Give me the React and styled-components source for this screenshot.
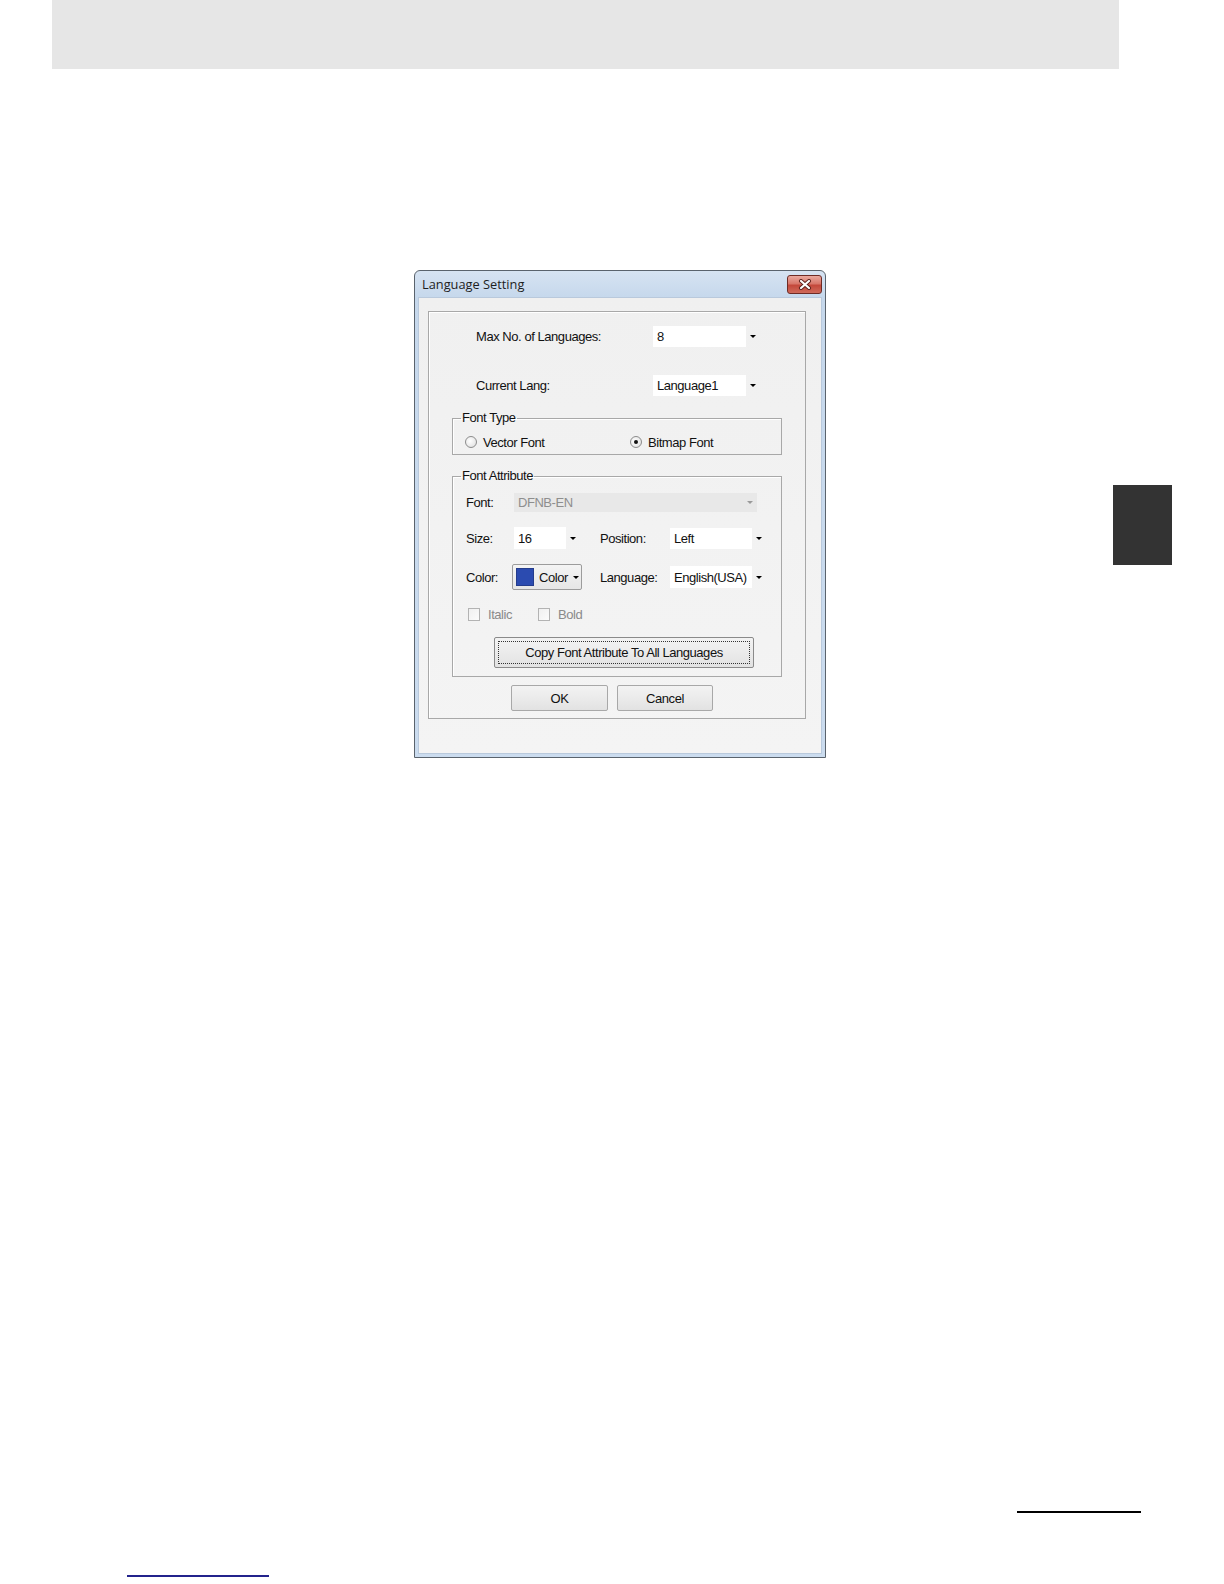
import React from 'react';
import styled, { createGlobalStyle } from 'styled-components';

const GlobalStyle = createGlobalStyle`
  html, body { margin: 0; padding: 0; background: #ffffff; }
  body { font-family: "Liberation Sans", Arial, sans-serif; color: #000; }
  * { box-sizing: border-box; }
`;

const Page = styled.div`
  width: 1224px;
  height: 1584px;
  overflow: hidden;
  background: #ffffff;
  display: flex;
  flex-direction: column;
`;

const HeaderBand = styled.div`
  margin-left: 52px;
  width: 1067px;
  height: 69px;
  background: #e6e6e6;
`;

const Middle = styled.div`
  display: flex;
  align-items: flex-start;
  margin-top: 201px;
`;

const ThumbTab = styled.div`
  margin-left: 287px;
  margin-top: 215px;
  width: 59px;
  height: 80px;
  background: #333333;
`;

const PageRule = styled.div`
  margin-top: 753px;
  margin-left: 1017px;
  width: 124px;
  height: 2px;
  background: #000;
`;

const LinkRule = styled.div`
  margin-top: 62px;
  margin-left: 127px;
  width: 142px;
  height: 2px;
  background: #23238c;
`;

/* ---------- dialog ---------- */

const Dialog = styled.div`
  margin-left: 414px;
  width: 412px;
  height: 488px;
  border: 1px solid #5a636d;
  border-radius: 6px 6px 0 0;
  background: linear-gradient(to bottom, #d6e3f2 0px, #c6d8ec 26px, #cbdcef 100%);
  display: flex;
  flex-direction: column;
`;

const TitleBar = styled.div`
  height: 26px;
  display: flex;
  align-items: flex-start;
  justify-content: space-between;
`;

const TitleText = styled.span`
  padding-left: 7px;
  line-height: 26px;
  font-family: "Open Sans", "Noto Sans", sans-serif;
  font-size: 12.8px;
  color: #1e1e1e;
`;

const CloseButton = styled.div`
  margin-top: 4px;
  margin-right: 3px;
  width: 35px;
  height: 19px;
  border: 1px solid #6e2b25;
  border-radius: 3px;
  background: linear-gradient(to bottom, #e9a99f 0%, #d8776a 45%, #c4483b 55%, #cf6a5a 100%);
  display: flex;
  align-items: center;
  justify-content: center;
`;

const Body = styled.div`
  flex: 1;
  margin: 0 3px 3px 3px;
  background: linear-gradient(to bottom, #f0f0f0, #f4f4f4);
  border: 1px solid #b9c9dc;
  display: flex;
  padding: 13px 15px 34px 9px;
`;

const Panel = styled.div`
  flex: 1;
  border: 1px solid #a8a8a8;
  box-shadow: inset 1px 1px 0 #ffffff;
  display: flex;
  flex-direction: column;
  font-size: 13px;
  letter-spacing: -0.45px;
  color: #111;
`;

const SettingRow = styled.div`
  display: flex;
  align-items: center;
  padding-left: 47px;
  margin-top: ${(p) => p.$gap}px;
`;

const SettingLabel = styled.span`
  width: 177px;
`;

const ComboBox = styled.div`
  display: flex;
  align-items: stretch;
  justify-self: start;
  width: max-content;
  height: ${(p) => p.$height}px;
  background: ${(p) => (p.$disabled ? '#e8e8e8' : 'transparent')};
`;

const ComboField = styled.div`
  width: ${(p) => p.$width}px;
  background: ${(p) => (p.$disabled ? 'transparent' : '#ffffff')};
  color: ${(p) => (p.$disabled ? '#8e8e8e' : '#111')};
  padding-left: 4px;
  display: flex;
  align-items: center;
  white-space: nowrap;
`;

const ComboButton = styled.div`
  width: 14px;
  display: flex;
  align-items: center;
  justify-content: center;
`;

const Caret = styled.span`
  width: 0;
  height: 0;
  border-left: 3px solid transparent;
  border-right: 3px solid transparent;
  border-top: 3px solid ${(p) => (p.$disabled ? '#9a9a9a' : '#000')};
`;

function Combo({ value, width, height, disabled }) {
  return (
    <ComboBox $height={height} $disabled={disabled}>
      <ComboField $width={width} $disabled={disabled}>{value}</ComboField>
      <ComboButton>
        <Caret $disabled={disabled} />
      </ComboButton>
    </ComboBox>
  );
}

const GroupBox = styled.fieldset`
  margin: ${(p) => p.$top}px 23px 0 23px;
  padding: 0 0 ${(p) => p.$bottom}px 0;
  border: 1px solid #a8a8a8;
  box-shadow: inset 1px 1px 0 #ffffff;
  min-width: 0;
`;

const GroupLegend = styled.legend`
  margin-left: 8px;
  padding: 0 1px;
  line-height: 14px;
  font-size: 13px;
`;

const RadioRow = styled.div`
  display: flex;
  align-items: center;
  height: 18px;
  margin-top: 8px;
  padding-left: 12px;
`;

const RadioItem = styled.label`
  display: flex;
  align-items: center;
  gap: 6px;
  width: ${(p) => (p.$width ? `${p.$width}px` : 'auto')};
`;

const RadioCircle = styled.span`
  width: 12px;
  height: 12px;
  border-radius: 50%;
  border: 1px solid #8c8c8c;
  background: radial-gradient(circle at 40% 40%, #ffffff 0%, #e6e6e6 70%, #d4d4d4 100%);
  display: flex;
  align-items: center;
  justify-content: center;
  &::after {
    content: '';
    width: 4px;
    height: 4px;
    border-radius: 50%;
    background: ${(p) => (p.$checked ? '#111' : 'transparent')};
  }
`;

const AttrGrid = styled.div`
  display: grid;
  grid-template-columns: 48px 86px 70px 1fr;
  padding-left: 13px;
  margin-top: ${(p) => p.$gap}px;
  height: ${(p) => p.$height}px;
  align-items: center;
`;

const WideCell = styled.div`
  grid-column: 2 / 5;
`;

const ColorButton = styled.div`
  margin-left: -2px;
  width: 70px;
  height: 26px;
  border: 1px solid #9c9c9c;
  border-radius: 2px;
  background: linear-gradient(to bottom, #f4f4f4, #e6e6e6);
  display: flex;
  align-items: center;
  padding-left: 3px;
  gap: 5px;
`;

const Swatch = styled.span`
  width: 18px;
  height: 18px;
  background: #2b4bb0;
  border: 1px solid #243c8c;
`;

const CheckRow = styled.div`
  display: flex;
  align-items: center;
  height: 19px;
  margin-top: 15px;
  padding-left: 15px;
  color: #8a8a8a;
`;

const CheckItem = styled.label`
  display: flex;
  align-items: center;
  gap: 8px;
  width: ${(p) => (p.$width ? `${p.$width}px` : 'auto')};
`;

const CheckBoxSquare = styled.span`
  width: 12px;
  height: 13px;
  border: 1px solid #b3b3b3;
  background: linear-gradient(135deg, #f0f0f0, #fbfbfb);
`;

const PushButton = styled.div`
  position: relative;
  width: ${(p) => p.$width}px;
  height: ${(p) => p.$height}px;
  margin-left: ${(p) => p.$left || 0}px;
  margin-top: ${(p) => p.$top || 0}px;
  border: 1px solid ${(p) => (p.$focused ? '#8a8a8a' : '#a8a8a8')};
  border-radius: 2px;
  background: linear-gradient(to bottom, #f3f3f3 0%, #ebebeb 50%, #e2e2e2 100%);
  display: flex;
  align-items: center;
  justify-content: center;
  font-size: 13px;
  &::after {
    content: '';
    position: absolute;
    inset: 3px;
    border: 1px dotted ${(p) => (p.$focused ? '#333' : 'transparent')};
  }
`;

const ButtonRow = styled.div`
  display: flex;
  gap: 9px;
  margin-top: 8px;
  padding-left: 82px;
`;

export default function App() {
  return (
    <>
      <GlobalStyle />
      <Page>
        <HeaderBand />
        <Middle>
          <Dialog>
            <TitleBar>
              <TitleText>Language Setting</TitleText>
              <CloseButton>
                <svg width="14" height="11" viewBox="0 0 14 11">
                  <path d="M3 2 L11 9 M11 2 L3 9" stroke="#5a1f1a" strokeWidth="4" strokeLinecap="round" />
                  <path d="M3 2 L11 9 M11 2 L3 9" stroke="#ffffff" strokeWidth="2.2" strokeLinecap="round" />
                </svg>
              </CloseButton>
            </TitleBar>
            <Body>
              <Panel>
                <SettingRow $gap={14}>
                  <SettingLabel>Max No. of Languages:</SettingLabel>
                  <Combo value="8" width={93} height={21} />
                </SettingRow>
                <SettingRow $gap={28}>
                  <SettingLabel>Current Lang:</SettingLabel>
                  <Combo value="Language1" width={93} height={21} />
                </SettingRow>

                <GroupBox $top={15} $bottom={3}>
                  <GroupLegend>Font Type</GroupLegend>
                  <RadioRow>
                    <RadioItem $width={165}>
                      <RadioCircle />
                      Vector Font
                    </RadioItem>
                    <RadioItem>
                      <RadioCircle $checked />
                      Bitmap Font
                    </RadioItem>
                  </RadioRow>
                </GroupBox>

                <GroupBox $top={14} $bottom={8}>
                  <GroupLegend>Font Attribute</GroupLegend>
                  <AttrGrid $gap={8} $height={22}>
                    <span>Font:</span>
                    <WideCell>
                      <Combo value="DFNB-EN" width={229} height={19} disabled />
                    </WideCell>
                  </AttrGrid>
                  <AttrGrid $gap={14} $height={22}>
                    <span>Size:</span>
                    <Combo value="16" width={52} height={22} />
                    <span>Position:</span>
                    <Combo value="Left" width={82} height={21} />
                  </AttrGrid>
                  <AttrGrid $gap={15} $height={26}>
                    <span>Color:</span>
                    <ColorButton>
                      <Swatch />
                      <span>Color</span>
                      <Caret />
                    </ColorButton>
                    <span>Language:</span>
                    <Combo value="English(USA)" width={82} height={22} />
                  </AttrGrid>
                  <CheckRow>
                    <CheckItem $width={70}>
                      <CheckBoxSquare />
                      Italic
                    </CheckItem>
                    <CheckItem>
                      <CheckBoxSquare />
                      Bold
                    </CheckItem>
                  </CheckRow>
                  <PushButton $width={260} $height={31} $left={41} $top={13} $focused>
                    Copy Font Attribute To All Languages
                  </PushButton>
                </GroupBox>

                <ButtonRow>
                  <PushButton $width={97} $height={26}>OK</PushButton>
                  <PushButton $width={96} $height={26}>Cancel</PushButton>
                </ButtonRow>
              </Panel>
            </Body>
          </Dialog>
          <ThumbTab />
        </Middle>
        <PageRule />
        <LinkRule />
      </Page>
    </>
  );
}
